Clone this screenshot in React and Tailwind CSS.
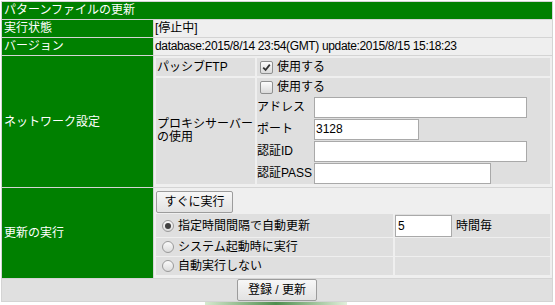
const Check = ({ checked }) => (
  <span className="inline-flex h-[13px] w-[13px] shrink-0 items-center justify-center rounded-[2px] border border-[#8e8f8f] bg-gradient-to-b from-[#fcfcfc] to-[#dadada]">
    {checked && (
      <svg width="9" height="9" viewBox="0 0 9 9">
        <path d="M1.2 4.6 L3.6 7 L7.8 1.6" stroke="#333" strokeWidth="1.8" fill="none" />
      </svg>
    )}
  </span>
);

const Radio = ({ checked }) => (
  <span className="inline-flex h-[12px] w-[12px] shrink-0 items-center justify-center rounded-full border border-[#9a9a9a] bg-gradient-to-b from-[#fafafa] to-[#dcdcdc]">
    {checked && <span className="h-[6px] w-[6px] rounded-full bg-[#404040]" />}
  </span>
);

const Field = ({ w, value = '' }) => (
  <input
    readOnly
    value={value}
    className={`h-[21px] ${w} border border-[#a9a9a9] bg-white px-px text-[12px] text-black outline-none`}
  />
);

const Btn = ({ children, w }) => (
  <button className={`h-[22px] ${w} rounded-[2px] border border-[#9c9c9c] bg-gradient-to-b from-[#f7f7f7] to-[#e2e2e2] text-[12px] text-black`}>
    {children}
  </button>
);

export default function App() {
  const green = 'bg-[#008000] px-[2px] text-white';
  const light = 'bg-[#efefef]';

  const proxyRows = [
    { label: 'アドレス', w: 'w-[213px]' },
    { label: 'ポート', w: 'w-[105px]', value: '3128' },
    { label: '認証ID', w: 'w-[213px]' },
    { label: '認証PASS', w: 'w-[177px]' },
  ];

  return (
    <div className="min-h-[305px] bg-white pl-px pt-px font-[family-name:Liberation_Sans,Noto_Sans_CJK_JP,sans-serif] text-[12px] text-black">
      <div className="grid w-[552px] grid-cols-[151px_1fr] gap-px bg-[#d4d4d4] p-px">
        {/* title */}
        <div className={`col-span-2 h-[17px] leading-[17px] ${green}`}>パターンファイルの更新</div>

        <div className={`h-[17px] leading-[17px] ${green}`}>実行状態</div>
        <div className={`${light} px-[1px] leading-[17px]`}>[停止中]</div>

        <div className={`h-[17px] leading-[17px] ${green}`}>バージョン</div>
        <div className={`${light} px-[1px] leading-[17px] tracking-[-0.35px]`}>
          database:2015/8/14 23:54(GMT) update:2015/8/15 15:18:23
        </div>

        {/* network */}
        <div className={`flex items-center ${green}`}>ネットワーク設定</div>
        <div className={`${light} px-[2px] pt-[2px] pb-[3px]`}>
          <div className="grid grid-cols-[99px_1fr] gap-[2px]">
            <div className="h-[18px] bg-[#dfdfdf] px-px leading-[18px]">パッシブFTP</div>
            <div className="flex h-[18px] items-center gap-[4px] bg-[#dfdfdf] pl-[3px]">
              <Check checked />
              <span>使用する</span>
            </div>
            <div className="flex items-center bg-[#dfdfdf] px-px leading-[13px]">
              プロキシサーバーの使用
            </div>
            <div className="bg-[#dfdfdf]">
              <div className="flex h-[18px] items-center gap-[4px] pl-[3px]">
                <Check />
                <span>使用する</span>
              </div>
              {proxyRows.map(r => (
                <div key={r.label} className="grid h-[22px] grid-cols-[57px_1fr] items-center">
                  <span>{r.label}</span>
                  <Field w={r.w} value={r.value} />
                </div>
              ))}
            </div>
          </div>
        </div>

        {/* update */}
        <div className={`flex items-center ${green}`}>更新の実行</div>
        <div className={`${light} px-[2px] pt-[3px] pb-[3px]`}>
          <Btn w="w-[77px]">すぐに実行</Btn>
          <div className="mt-px grid grid-cols-[237px_1fr] gap-x-[2px] gap-y-px">
            <div className="flex h-[23px] items-center gap-[4px] bg-[#dfdfdf] pl-[6px]">
              <Radio checked />
              <span>指定時間間隔で自動更新</span>
            </div>
            <div className="flex h-[23px] items-center gap-[4px] bg-[#dfdfdf]">
              <input
                readOnly
                value="5"
                className="h-[22px] w-[57px] border border-[#a9a9a9] bg-white px-[2px] text-[12px] outline-none"
              />
              <span>時間毎</span>
            </div>
            <div className="flex h-[18px] items-center gap-[4px] bg-[#dfdfdf] pl-[6px]">
              <Radio />
              <span>システム起動時に実行</span>
            </div>
            <div className="h-[18px] bg-[#dfdfdf]" />
            <div className="flex h-[18px] items-center gap-[4px] bg-[#dfdfdf] pl-[6px]">
              <Radio />
              <span>自動実行しない</span>
            </div>
            <div className="h-[18px] bg-[#dfdfdf]" />
          </div>
        </div>

        {/* submit */}
        <div className="col-span-2 flex h-[22px] justify-center bg-[#e0e0e0]">
          <Btn w="w-[80px]">登録 / 更新</Btn>
        </div>
      </div>
      <div className="ml-[204px] h-[5px] w-[142px] bg-gradient-to-r from-[#d6e9cf] via-[#4e8e4e] to-[#e2f0dc]" />
    </div>
  );
}
